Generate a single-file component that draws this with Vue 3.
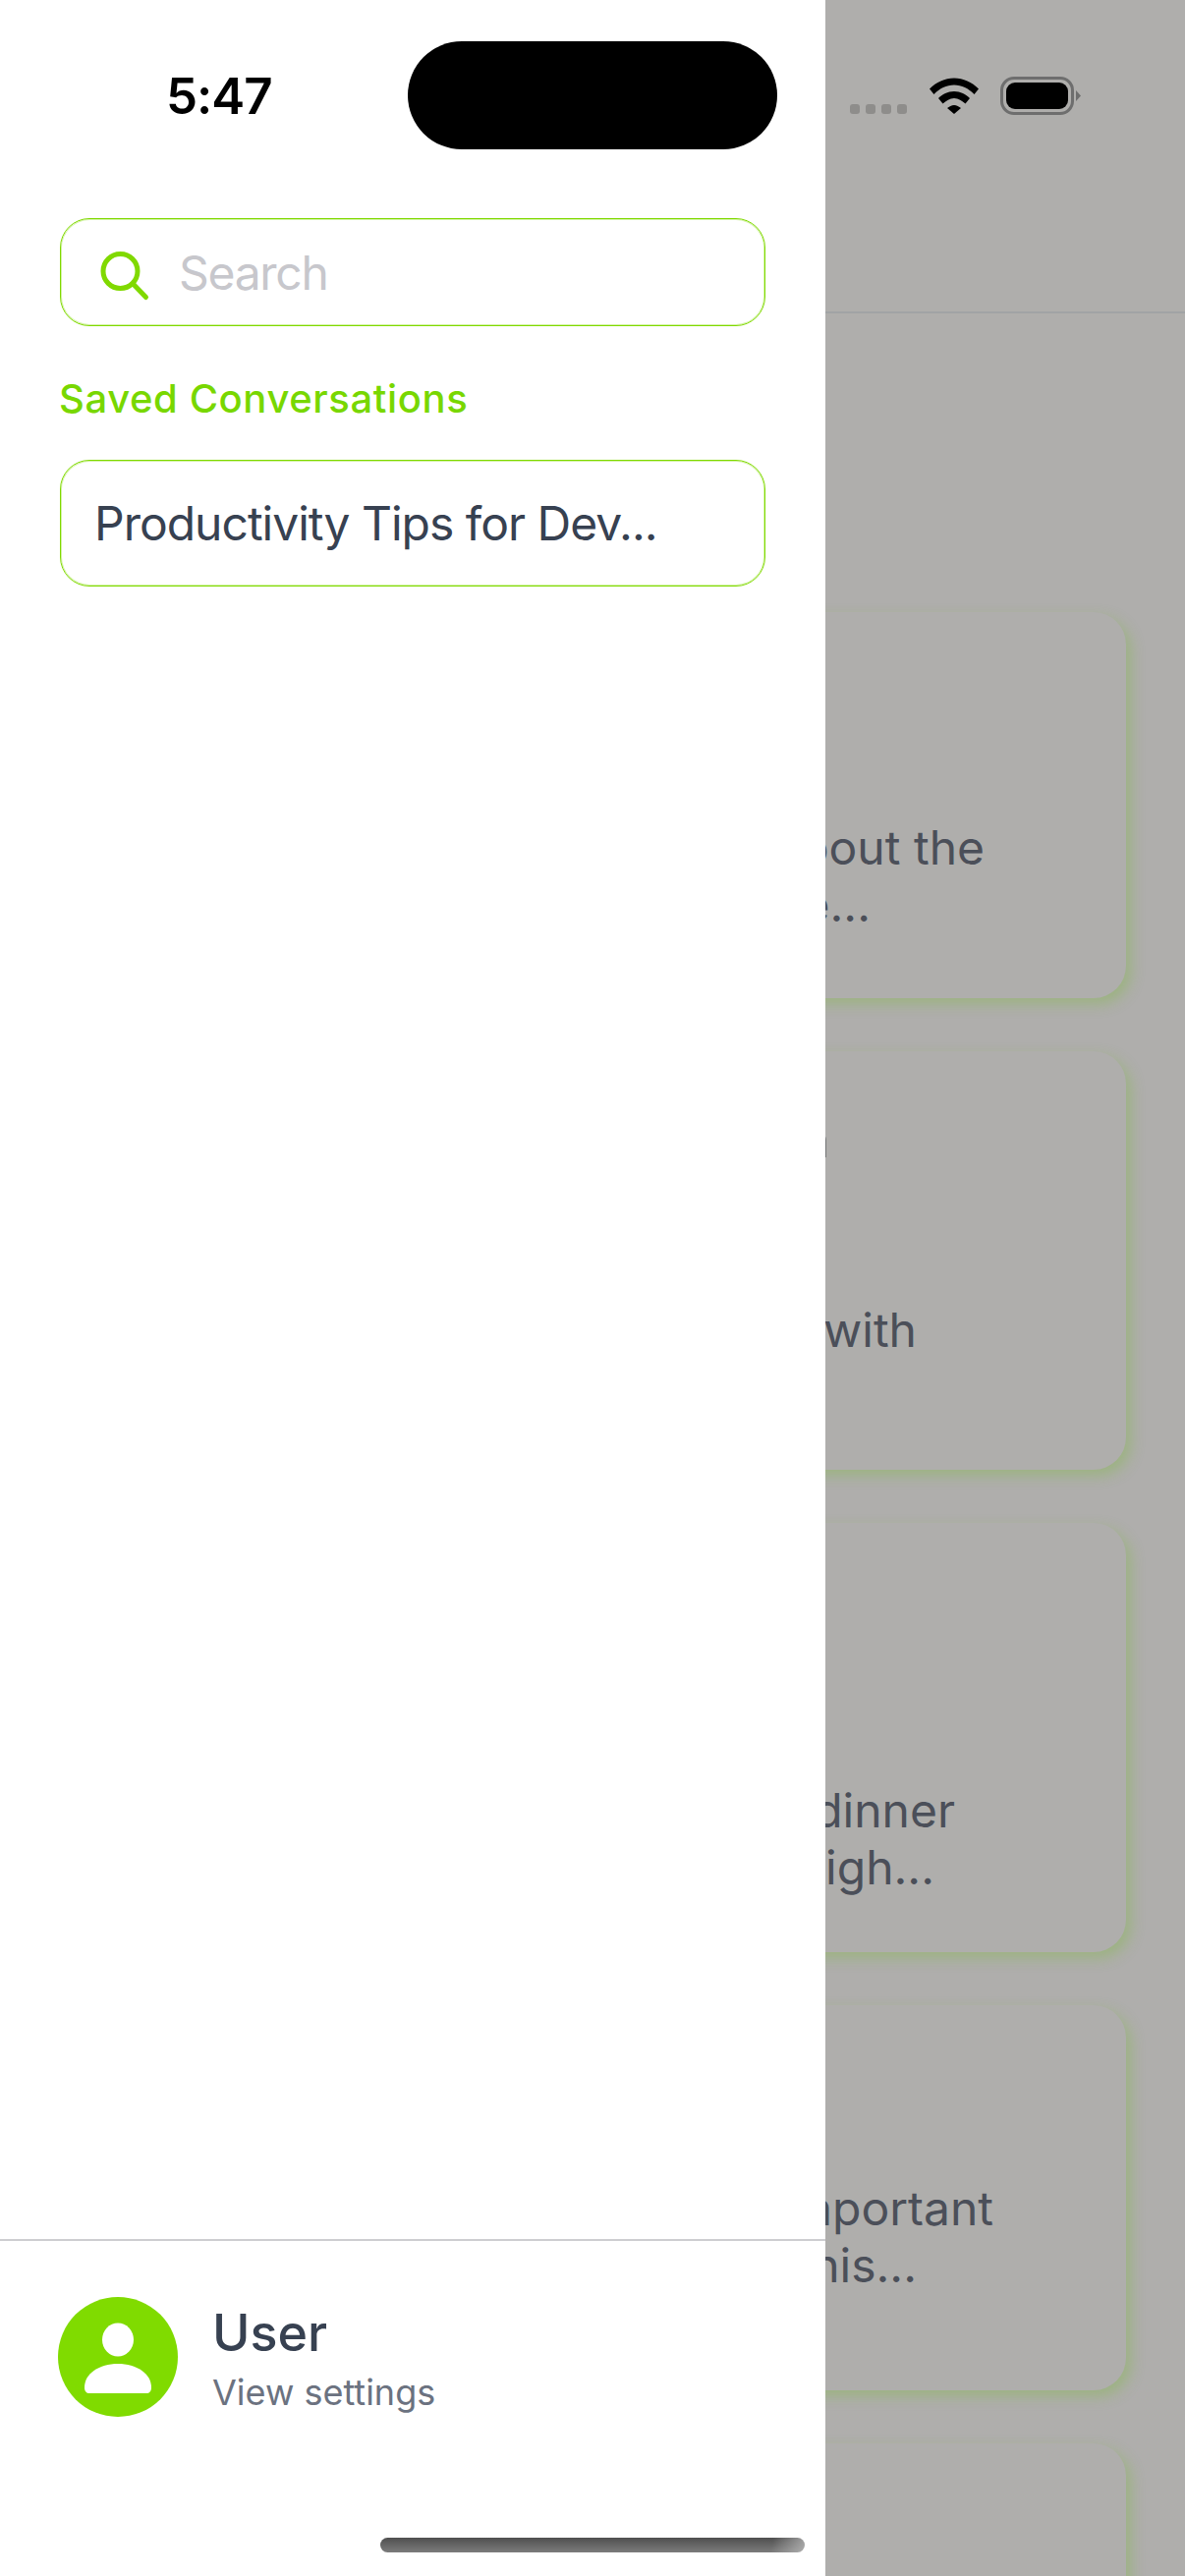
<script setup>
const cards = [
  { height: 393, pad: 211, lines: [{ text: 'about the', end: 144 }, { text: 'the...', end: 260 }] },
  { height: 426, pad: 60, title: 'Plan', titleEnd: 302, gap: 135, lines: [{ text: 'with', end: 213 }] },
  { height: 437, pad: 264, lines: [{ text: 'dinner', end: 174 }, { text: 'high...', end: 195 }] },
  { height: 392, pad: 178, lines: [{ text: 'important', end: 135 }, { text: 'this...', end: 213 }] },
  { height: 300, pad: 178, lines: [] }
]
</script>

<template>
  <div class="screen">
    <main class="page">
      <header class="page-header"></header>
      <section class="card-list">
        <article
          v-for="(card, i) in cards"
          :key="i"
          class="card"
          :style="{ height: card.height + 'px', paddingTop: card.pad + 'px' }"
        >
          <h3
            v-if="card.title"
            class="card-title"
            :style="{ paddingRight: card.titleEnd + 'px', marginBottom: card.gap + 'px' }"
          >{{ card.title }}</h3>
          <p
            v-for="line in card.lines"
            :key="line.text"
            class="card-line"
            :style="{ paddingRight: line.end + 'px' }"
          >{{ line.text }}</p>
        </article>
      </section>
    </main>

    <aside class="drawer">
      <div class="search">
        <svg class="search-icon" viewBox="0 0 70 70" fill="none" stroke="#80d900" stroke-width="5" stroke-linecap="round">
          <circle cx="32.5" cy="33" r="17.5" />
          <path d="M45.5 46l13 13.5" />
        </svg>
        <span class="search-text">Search</span>
      </div>
      <h2 class="saved-title">Saved Conversations</h2>
      <div class="saved-item">Productivity Tips for Dev...</div>

      <footer class="drawer-footer">
        <svg class="avatar" viewBox="0 0 122 122">
          <circle cx="61" cy="61" r="61" fill="#80db00" />
          <ellipse cx="61" cy="43.5" rx="16" ry="17" fill="#fff" />
          <path d="M27 92C27 78 42 68 61 68C80 68 95 78 95 92C95 96 93 98 90 98L32 98C29 98 27 96 27 92Z" fill="#fff" />
        </svg>
        <div class="user">
          <div class="user-name">User</div>
          <div class="user-sub">View settings</div>
        </div>
      </footer>
    </aside>

    <div class="status-bar">
      <span class="time">5:47</span>
      <div class="island"></div>
      <div class="signal"><i></i><i></i><i></i><i></i></div>
      <svg class="wifi" viewBox="0 0 50 37">
        <path d="M0 11.5C7 4.5 15.5 0.5 25 0.5C34.500 0.5 43 4.500 50 11.500L45.500 17C39.500 11 33 7.500 25 7.500C17 7.500 10.500 11 4.500 17Z" />
        <path d="M9 21C13 17 18.500 14 25 14C31.500 14 37 17 41 21L36.500 26.500C33 23.500 29.500 21 25 21C20.500 21 17 23.500 13.500 26.500Z" />
        <path d="M18 31C20 29.500 22.500 28 25 28C27.500 28 30 29.500 32 31L25 37Z" />
      </svg>
      <div class="battery"><div class="battery-fill"></div></div>
      <div class="battery-nub"></div>
    </div>

    <div class="home-bar"></div>
  </div>
</template>

<style>
html,
body {
  margin: 0;
  background: #afaeac;
}
</style>

<style scoped>
.screen {
  position: relative;
  width: 1206px;
  height: 2622px;
  overflow: hidden;
  background: #afaeac;
  font-family: Inter, "Noto Sans", sans-serif;
}

.page-header {
  height: 317px;
  border-bottom: 2px solid #a1a3a5;
}

.card-list {
  display: flex;
  flex-direction: column;
  gap: 54px;
  padding: 304px 60px 0;
}

.card {
  box-sizing: border-box;
  flex-shrink: 0;
  border-radius: 33px;
  background: #afaeac;
  box-shadow: 5px 6px 14px rgba(120, 190, 50, 0.35);
}

.card-title {
  margin: 0;
  font-size: 51px;
  line-height: 60px;
  font-weight: 600;
  text-align: right;
  color: #3f4146;
}

.card-line {
  margin: 0;
  font-size: 48px;
  line-height: 58px;
  text-align: right;
  color: #4b4f59;
}

.drawer {
  position: absolute;
  top: 0;
  left: 0;
  width: 840px;
  height: 2622px;
  box-sizing: border-box;
  display: flex;
  flex-direction: column;
  padding-top: 222px;
  background: #fff;
}

.search,
.saved-item {
  box-sizing: border-box;
  width: 718px;
  margin-left: 61px;
  display: flex;
  align-items: center;
  border: 1px solid #80d900;
  border-radius: 30px;
  box-shadow: inset 0 0 0 1px rgba(128, 217, 0, 0.35);
}

.search {
  height: 110px;
  padding-left: 28px;
}

.search-icon {
  width: 70px;
  height: 70px;
  margin-top: 2px;
  flex-shrink: 0;
}

.search-text {
  margin-left: 22px;
  font-size: 48px;
  letter-spacing: -1.3px;
  color: #c7c7cc;
}

.saved-title {
  margin: 50px 0 0 60px;
  font-size: 40px;
  line-height: 48px;
  font-weight: 500;
  letter-spacing: 0.6px;
  color: #78d700;
}

.saved-item {
  height: 129px;
  margin-top: 38px;
  padding-left: 34px;
  font-size: 48px;
  letter-spacing: -1px;
  color: #374151;
}

.drawer-footer {
  box-sizing: border-box;
  height: 343px;
  margin-top: auto;
  padding: 57px 0 0 59px;
  display: flex;
  align-items: flex-start;
  gap: 35px;
  border-top: 2px solid #cdcdd0;
}

.avatar {
  width: 122px;
  height: 122px;
  flex-shrink: 0;
}

.user-name {
  margin-top: 6px;
  font-size: 52px;
  line-height: 62px;
  font-weight: 500;
  color: #374151;
}

.user-sub {
  margin-top: 7px;
  font-size: 36px;
  line-height: 44px;
  color: #6b7280;
}

.status-bar {
  position: absolute;
  top: 42px;
  left: 169px;
  display: flex;
  align-items: flex-start;
}

.time {
  width: 108px;
  margin-top: 26px;
  font-size: 51px;
  line-height: 60px;
  font-weight: 600;
  letter-spacing: -1px;
  color: #000;
}

.island {
  width: 376px;
  height: 110px;
  margin-left: 138px;
  border-radius: 55px;
  background: #000;
}

.signal {
  display: flex;
  gap: 6px;
  margin: 64px 0 0 74px;
}

.signal i {
  width: 10px;
  height: 10px;
  border-radius: 3px;
  background: #8e8d8b;
}

.wifi {
  width: 50px;
  height: 37px;
  margin: 37px 0 0 23px;
}

.battery {
  box-sizing: border-box;
  width: 75px;
  height: 39px;
  margin: 36px 0 0 22px;
  padding: 3px;
  border: 3px solid #6e6e6e;
  border-radius: 14px;
}

.battery-fill {
  width: 100%;
  height: 100%;
  border-radius: 9px;
  background: #000;
}

.battery-nub {
  width: 5px;
  height: 11px;
  margin: 50px 0 0 2px;
  background: #6e6e6e;
  clip-path: polygon(0 0, 100% 50%, 0 100%);
}

.home-bar {
  position: absolute;
  left: 387px;
  top: 2583px;
  width: 432px;
  height: 15px;
  border-radius: 8px;
  background:
    linear-gradient(100deg, transparent 92%, rgba(190, 190, 190, 0.75) 100%),
    linear-gradient(to bottom, #4f4f4f, #7c7c7c);
}
</style>
